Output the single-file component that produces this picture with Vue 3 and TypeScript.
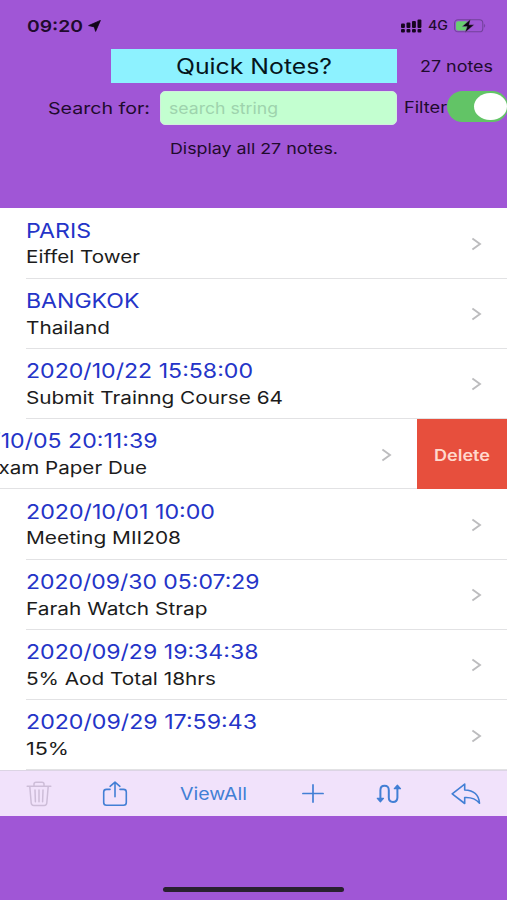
<script setup lang="ts">
import { ref } from 'vue'

interface Note {
  title: string
  titleWidth: number
  body: string
  bodyWidth: number
  swiped?: boolean
}

const notes = ref<Note[]>([
  { title: 'PARIS', titleWidth: 65, body: 'Eiffel Tower', bodyWidth: 114 },
  { title: 'BANGKOK', titleWidth: 113.5, body: 'Thailand', bodyWidth: 84 },
  { title: '2020/10/22 15:58:00', titleWidth: 227, body: 'Submit Trainng Course 64', bodyWidth: 257 },
  { title: '2020/10/05 20:11:39', titleWidth: 222.5, body: 'Exam Paper Due', bodyWidth: 161, swiped: true },
  { title: '2020/10/01 10:00', titleWidth: 189, body: 'Meeting MII208', bodyWidth: 155 },
  { title: '2020/09/30 05:07:29', titleWidth: 233.5, body: 'Farah Watch Strap', bodyWidth: 181.5 },
  { title: '2020/09/29 19:34:38', titleWidth: 232.5, body: '5% Aod Total 18hrs', bodyWidth: 190 },
  { title: '2020/09/29 17:59:43', titleWidth: 231, body: '15%', bodyWidth: 43 },
])

const filterOn = ref(true)

// Stretches a label horizontally until it spans the given width in pixels.
const vFit = {
  mounted(el: HTMLElement, binding: { value: number }) {
    const natural = el.getBoundingClientRect().width
    el.style.transform = `scaleX(${binding.value / natural})`
    el.style.marginRight = `${binding.value - natural}px`
  },
}
</script>

<template>
  <main class="screen">
    <header class="header">
      <div class="status">
        <span v-fit="56" class="fit time">09:20</span>
        <svg class="location" width="13" height="12" viewBox="0 0 13 12"><path d="M12.4 .4 7.6 11.4 6.3 6.9.6 5.6Z" fill="#120519" stroke="#120519" stroke-width=".8" stroke-linejoin="round" /></svg>
        <svg class="signal" width="21" height="14" viewBox="0 0 21 14" fill="#16061f">
          <rect x="0" y="4.6" width="3.9" height="4.5" rx="1" /><rect x="5.5" y="3.4" width="3.9" height="5.7" rx="1" />
          <rect x="11" y="2" width="3.9" height="7.1" rx="1" /><rect x="16.5" y=".5" width="3.9" height="8.6" rx="1" />
          <rect x="0" y="10" width="3.9" height="3.4" rx="1" /><rect x="5.5" y="10" width="3.9" height="3.4" rx="1" />
          <rect x="11" y="10" width="3.9" height="3.4" rx="1" /><rect x="16.5" y="10" width="3.9" height="3.4" rx="1" />
        </svg>
        <span v-fit="20" class="fit network">4G</span>
        <svg class="battery" width="33" height="14" viewBox="0 0 33 14">
          <rect x=".6" y=".8" width="28.2" height="12" rx="3.4" fill="none" stroke="#71419a" stroke-width="1.1" />
          <path d="M30.2 4.8q2 1.8 0 4Z" fill="#71419a" />
          <rect x="2" y="2.2" width="12" height="9.2" rx="2" fill="#68cf70" />
          <path d="M16.5 .3 8.2 7.6h5L11 13.4l9.2-7.6h-5.1Z" fill="#0b0610" stroke="#9b62bb" stroke-width=".4" />
        </svg>
      </div>

      <div class="title-row">
        <h1 class="title"><span v-fit="156" class="fit">Quick Notes?</span></h1>
        <span v-fit="73" class="fit count">27 notes</span>
      </div>

      <div class="search-row">
        <span v-fit="102" class="fit search-label">Search for:</span>
        <div class="field"><span v-fit="109" class="fit">search string</span></div>
        <span v-fit="43" class="fit filter-label">Filter</span>
        <button class="switch" :class="{ on: filterOn }" aria-label="Filter" @click="filterOn = !filterOn"><i class="knob"></i></button>
      </div>

      <p class="summary"><span v-fit="168" class="fit">Display all 27 notes.</span></p>
    </header>

    <ul class="list">
      <li v-for="note in notes" :key="note.title" class="row" :class="{ swiped: note.swiped }">
        <div class="cell">
          <div class="texts">
            <div class="note-title"><span v-fit="note.titleWidth" class="fit">{{ note.title }}</span></div>
            <div class="note-body"><span v-fit="note.bodyWidth" class="fit">{{ note.body }}</span></div>
          </div>
          <svg class="chevron" width="11" height="14" viewBox="0 0 11 14"><path d="M1.4 1.4 9 7 1.4 12.6" fill="none" stroke="#bcbcbe" stroke-width="1.9" /></svg>
        </div>
        <button v-if="note.swiped" class="delete"><span v-fit="56" class="fit">Delete</span></button>
      </li>
    </ul>

    <nav class="toolbar">
      <svg class="trash" width="26" height="26" viewBox="0 0 26 26" fill="none" stroke="#cdbdd8" stroke-width="1.5" stroke-linecap="round" stroke-linejoin="round">
        <path d="M1.2 5.3H24.8M3.8 5.5 5.2 22q.2 2.4 2.5 2.4h10.6q2.3 0 2.5-2.4L22.2 5.5M8 5V3q0-1.8 2-1.8h6q2 0 2 1.8v2M9 9l.4 11.7M13 9v11.7M17 9l-.4 11.7" />
      </svg>
      <svg class="share" width="26" height="26" viewBox="0 0 26 26" fill="none" stroke="#427fd5" stroke-width="1.6" stroke-linecap="round" stroke-linejoin="round">
        <path d="M8 8.4H4.5Q1.7 8.4 1.7 11v10.6q0 2.7 2.8 2.7h17q2.8 0 2.8-2.7V11q0-2.6-2.8-2.6H18M13 15.8V1.3M8.1 5.3 13 1.1l4.9 4.2" />
      </svg>
      <span v-fit="67" class="fit view-all">ViewAll</span>
      <svg class="plus" width="22" height="19" viewBox="0 0 22 19" fill="none" stroke="#427fd5" stroke-width="1.7" stroke-linecap="round">
        <path d="M.9 9.5h20.2M11 .9v17.2" />
      </svg>
      <svg class="route" width="26" height="20" viewBox="0 0 26 20" fill="none" stroke="#427fd5" stroke-width="2" stroke-linecap="round" stroke-linejoin="round">
        <path d="M4.4 16V6.2Q4.4 1.8 8.6 1.8T12.8 6.2V13.6Q12.8 18 17 18T21.4 13.6V4" />
        <path d="M1.3 14.3h6.2l-3.1 3.6ZM18.3 4.7h6.2L21.4 1.1Z" fill="#427fd5" stroke-width="1.2" />
      </svg>
      <svg class="reply" width="30" height="22" viewBox="0 0 30 22" fill="none" stroke="#427fd5" stroke-width="1.6" stroke-linejoin="round">
        <path d="M1.2 10.8 13.7 1.1V7Q27.5 7.4 28.5 20.2 23.4 14 13.7 14.5V20.5Z" />
      </svg>
    </nav>

    <footer class="footer"><i class="home-bar"></i></footer>
  </main>
</template>

<style>
body {
  margin: 0;
}
</style>

<style scoped>
.screen {
  width: 507px;
  height: 900px;
  display: flex;
  flex-direction: column;
  overflow: hidden;
  background: #a056d6;
  font-family: Inter, "Liberation Sans", sans-serif;
  color: #1f0b2d;
}
.fit {
  display: inline-block;
  white-space: nowrap;
  transform-origin: 0 50%;
  flex: none;
}
button {
  border: 0;
  padding: 0;
  font-family: inherit;
}
.header {
  height: 208.3px;
  flex: none;
}
.status {
  height: 48.5px;
  box-sizing: border-box;
  padding: 3px 20px 0 27px;
  display: flex;
  align-items: center;
}
.time {
  font-size: 16.5px;
  font-weight: 600;
}
.location {
  margin-left: 5px;
}
.signal {
  margin-left: auto;
}
.network {
  margin-left: 6px;
  font-size: 12.5px;
  font-weight: 500;
}
.battery {
  margin-left: 6px;
}
.title-row {
  display: flex;
  align-items: center;
  height: 34.5px;
  padding-left: 110.5px;
}
.title {
  box-sizing: border-box;
  width: 286.5px;
  height: 34.5px;
  margin: 0;
  padding-top: 2px;
  display: flex;
  align-items: center;
  justify-content: center;
  background: #8df2ff;
  color: #05151c;
  font-size: 21px;
  font-weight: 400;
}
.count {
  margin-left: 23px;
  padding-top: 1px;
  font-size: 15.5px;
}
.search-row {
  display: flex;
  align-items: center;
  margin-top: 8px;
  padding-left: 48px;
  height: 34px;
}
.search-label {
  font-size: 16.5px;
}
.field {
  display: flex;
  align-items: center;
  box-sizing: border-box;
  flex: none;
  width: 237px;
  height: 34px;
  margin-left: 10px;
  padding-left: 8px;
  border-radius: 5px;
  border: 1px solid #d3ecdf;
  background: #c3ffd0;
  color: #9ed3ad;
  font-size: 16px;
}
.filter-label {
  margin-left: 6.5px;
  margin-top: -2px;
  font-size: 15.5px;
}
.switch {
  display: flex;
  justify-content: flex-start;
  align-items: center;
  flex: none;
  box-sizing: border-box;
  width: 61px;
  height: 31px;
  margin-top: -3px;
  margin-left: .5px;
  padding: 0 1px;
  border-radius: 16px;
  background: #ddd;
}
.switch.on {
  justify-content: flex-end;
  background: #62c466;
}
.knob {
  width: 33px;
  height: 27.5px;
  border-radius: 50%;
  background: #fff;
}
.summary {
  margin: 13.5px 0 0;
  padding-left: 169.5px;
  font-size: 15px;
  line-height: 19px;
}
.list {
  margin: 0;
  padding: 0;
  list-style: none;
  background: #fff;
  flex: none;
}
.row {
  display: flex;
  height: 70.28px;
}
.cell {
  position: relative;
  display: flex;
  align-items: center;
  flex: none;
  box-sizing: border-box;
  width: 507px;
  height: 100%;
  padding-left: 25.5px;
}
.swiped .cell {
  margin-left: -90.5px;
}
.swiped .note-body {
  padding-left: 51px;
}
.texts {
  flex: 1;
  align-self: stretch;
  box-sizing: border-box;
  padding-top: 10.3px;
  border-bottom: 1px solid #e2e2e4;
}
.chevron {
  position: absolute;
  right: 25px;
  top: 28.5px;
}
.note-title {
  height: 24px;
  line-height: 24px;
  font-size: 20px;
  color: #2434c8;
}
.note-body {
  margin-top: 3.7px;
  height: 21px;
  line-height: 21px;
  font-size: 17.3px;
  color: #1c1c1c;
}
.delete {
  display: flex;
  align-items: center;
  justify-content: center;
  flex: none;
  box-sizing: border-box;
  width: 90.5px;
  height: 70px;
  padding-top: 2px;
  background: #e74f3d;
  color: #ffd9cd;
  font-size: 15.5px;
  font-weight: 600;
}
.toolbar {
  display: flex;
  align-items: center;
  flex: none;
  box-sizing: border-box;
  height: 45.5px;
  padding: 0 26px;
  border-top: 1px solid #dcd5e4;
  background: #f1e2fb;
}
.share {
  margin-left: 50px;
}
.view-all {
  margin-left: 52px;
  font-size: 17px;
  color: #427fd5;
}
.plus {
  margin-left: 55px;
}
.route {
  margin-left: 51.5px;
}
.reply {
  margin-left: 49px;
}
.footer {
  flex: 1;
  display: flex;
  justify-content: center;
  align-items: flex-end;
  padding-bottom: 8px;
}
.home-bar {
  width: 181px;
  height: 5px;
  border-radius: 3px;
  background: #29202f;
}
</style>
